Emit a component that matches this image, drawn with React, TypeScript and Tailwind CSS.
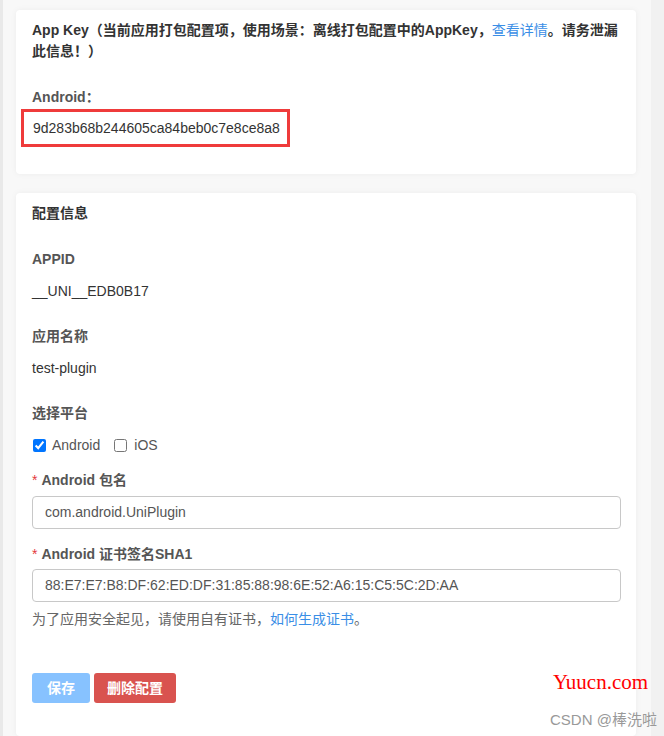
const sans = "font-['Liberation_Sans','Noto_Sans_CJK_SC',sans-serif]";

const Label = ({ children, required }: { children: React.ReactNode; required?: boolean }) => (
  <div className="flex items-center h-[20px] text-[14px] font-bold text-[#555]">
    {required && <span className="text-[#e4393c] font-normal mr-[4px]">*</span>}
    {children}
  </div>
);

const TextInput = ({ value }: { value: string }) => (
  <div className="h-[33px] border border-[#c8c8c8] rounded-[4px] px-[12px] flex items-center text-[14px] text-[#555]">
    {value}
  </div>
);

export default function App() {
  return (
    <div className={`relative flex h-[736px] overflow-hidden bg-[#f8f8f8] ${sans}`}>
      <div className="w-[3px] bg-[#e9e9e9]" />

      <div className="flex-1 pl-[13px] pr-[15px] pt-[10px] flex flex-col gap-[19px]">
        {/* app key card */}
        <section className="bg-white rounded-[4px] shadow-[0_0_6px_rgba(0,0,0,0.05)] px-[16px] pt-[10px] pb-[27px]">
          <p className="text-[14px] font-bold text-[#333] leading-[21px]">
            App Key（当前应用打包配置项，使用场景：离线打包配置中的AppKey，
            <span className="text-[#3a8ee6] font-normal">查看详情</span>
            。请务泄漏此信息！）
          </p>
          <div className="mt-[25px] h-[20px] flex items-center text-[14px] font-bold text-[#555]">Android：</div>
          <div className="mt-[2px] -ml-[11px] w-[269px] h-[38px] border-[3px] border-[#ef3b3b] flex items-center pl-[9px] text-[14px] text-[#333]">
            9d283b68b244605ca84beb0c7e8ce8a8
          </div>
        </section>

        {/* config card */}
        <section className="flex-1 bg-white rounded-[4px] shadow-[0_0_6px_rgba(0,0,0,0.05)] pl-[16px] pr-[15px] pt-[10px]">
          <div className="h-[20px] flex items-center text-[14px] font-bold text-[#333]">配置信息</div>

          <div className="mt-[26px]">
            <Label>APPID</Label>
          </div>
          <div className="mt-[12px] h-[20px] flex items-center text-[14px] text-[#333]">__UNI__EDB0B17</div>

          <div className="mt-[25px]">
            <Label>应用名称</Label>
          </div>
          <div className="mt-[12px] h-[20px] flex items-center text-[14px] text-[#333]">test-plugin</div>

          <div className="mt-[25px]">
            <Label>选择平台</Label>
          </div>
          <div className="mt-[12px] h-[20px] flex items-center text-[14px] text-[#555]">
            <input type="checkbox" defaultChecked className="w-[13px] h-[13px] m-0 ml-[1px]" />
            <span className="ml-[6px]">Android</span>
            <input type="checkbox" className="w-[13px] h-[13px] m-0 ml-[14px]" />
            <span className="ml-[7px]">iOS</span>
          </div>

          <div className="mt-[15px]">
            <Label required>Android 包名</Label>
          </div>
          <div className="mt-[6px]">
            <TextInput value="com.android.UniPlugin" />
          </div>

          <div className="mt-[15px]">
            <Label required>Android 证书签名SHA1</Label>
          </div>
          <div className="mt-[5px]">
            <TextInput value="88:E7:E7:B8:DF:62:ED:DF:31:85:88:98:6E:52:A6:15:C5:5C:2D:AA" />
          </div>
          <p className="mt-[7px] h-[20px] flex items-center text-[14px] text-[#666]">
            为了应用安全起见，请使用自有证书，<span className="text-[#3a8ee6]">如何生成证书</span>。
          </p>

          <div className="mt-[44px] flex gap-[4px]">
            <button className="w-[58px] h-[30px] rounded-[3px] bg-[#87c2ff] text-white text-[14px] font-semibold">保存</button>
            <button className="w-[82px] h-[30px] rounded-[3px] bg-[#d9534f] text-white text-[14px] font-semibold">删除配置</button>
          </div>
        </section>
      </div>

      <div className="w-[13px] bg-[#f1f1f1]" />

      <div className="absolute left-[553px] top-[670px] text-[21px] leading-[24px] text-[#ff0000] font-['Liberation_Serif',serif]">
        Yuucn.com
      </div>
      <div className="absolute left-[550px] top-[710px] text-[15px] leading-[20px] text-[#999] font-['Liberation_Sans','Noto_Sans_CJK_SC',sans-serif]">
        CSDN @棒洗啦
      </div>
    </div>
  );
}
